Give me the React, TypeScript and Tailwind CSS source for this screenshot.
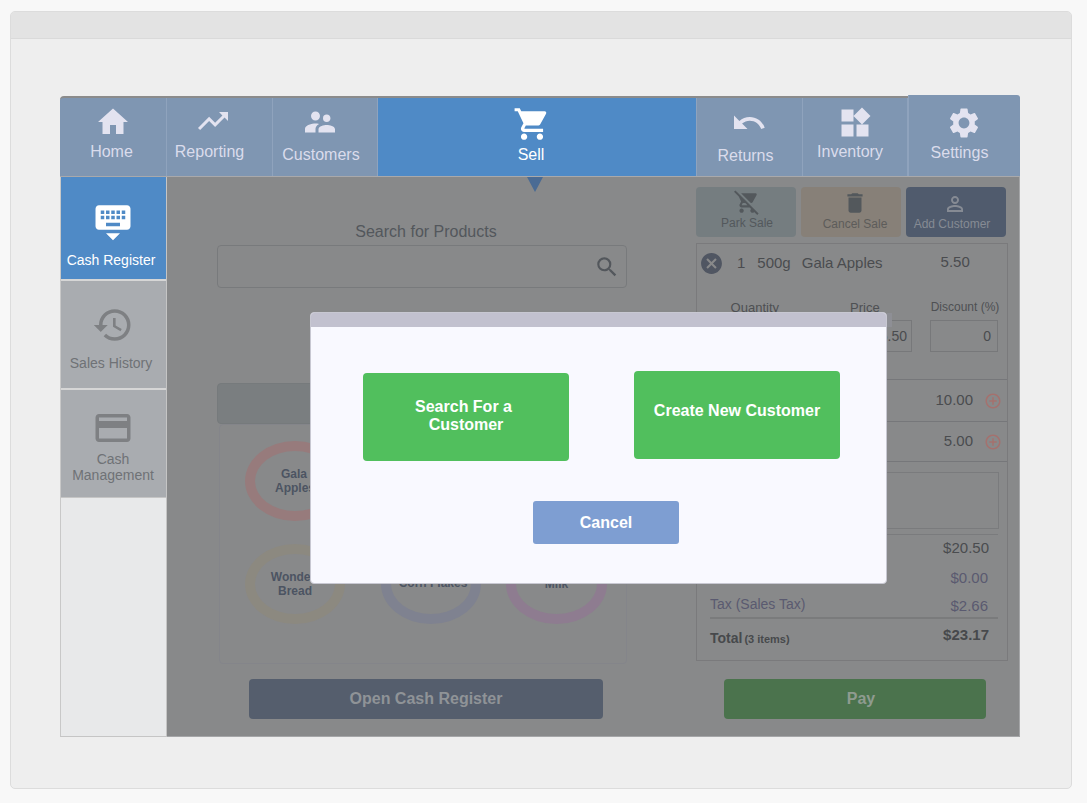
import React from "react";
import { MdHome, MdTrendingUp, MdSupervisorAccount, MdShoppingCart, MdUndo, MdWidgets, MdSettings, MdKeyboardHide, MdHistory, MdPayment, MdSearch, MdRemoveShoppingCart, MdDelete, MdPersonOutline, MdCancel, MdControlPoint } from "react-icons/md";

function Tab({ cls, icon, label, labelCls }: { cls: string; icon: React.ReactNode; label: string; labelCls: string }) {
  return (
    <div className={"flex flex-col items-center shrink-0 border-r border-[#8fa3bd] " + cls}>
      {icon}
      <span className={"text-[16px] leading-[18px] text-[#dadcec] " + labelCls}>{label}</span>
    </div>
  );
}

function Ring({ cls, l1, l2, textCls }: { cls: string; l1: string; l2?: string; textCls?: string }) {
  return (
    <div className={"w-[100px] h-[80px] rounded-[50%] border-[10px] flex flex-col items-center justify-center text-[12px] leading-[14px] font-bold text-[#4c5462] shrink-0 " + cls}>
      <span className={textCls}>{l1}</span>
      {l2 && <span>{l2}</span>}
    </div>
  );
}

function ActionBtn({ cls, icon, label, textCls }: { cls: string; icon: React.ReactNode; label: string; textCls: string }) {
  return (
    <div className={"w-[100px] h-[50px] rounded-[4px] flex flex-col items-center shrink-0 " + cls}>
      {icon}
      <span className={"text-[12px] leading-[14px] mt-[1px] " + textCls}>{label}</span>
    </div>
  );
}

export default function App() {
  return (
    <div className="w-[1087px] h-[803px] bg-[#f8f8f8] pt-[11px] pl-[10px] overflow-hidden font-['Liberation_Sans',Arial,sans-serif]">
      <div className="w-[1062px] h-[778px] bg-[#eeeeee] border border-[#dcdcdc] rounded-[5px] overflow-hidden">
        <div className="h-[27px] bg-[#e3e3e3] border-b border-[#dadada]" />
        <div className="pt-[57px] pl-[49px]">
          <div className="relative w-[960px] h-[641px]">
            {/* top nav */}
            <div className="flex h-[81px] bg-[#7f96b2] border-t-2 border-[#8b8b8b] rounded-t-[4px] border-b border-b-[#a9a9ab]">
              <Tab cls="w-[107px] pt-[6px] rounded-tl-[4px]" icon={<MdHome size={36} className="text-[#e3e3f0] mr-[1px]" />} label="Home" labelCls="mt-[3px] mr-[3px]" />
              <Tab cls="w-[106px] pt-[5px]" icon={<MdTrendingUp size={36} className="text-[#e3e3f0] mr-[14px]" />} label="Reporting" labelCls="mt-[4px] mr-[8px] -ml-[12px]" />
              <Tab cls="w-[105px] pt-[6px]" icon={<MdSupervisorAccount size={36} className="text-[#e3e3f0] mr-[10px]" />} label="Customers" labelCls="mt-[6px] -ml-[8px]" />
              <div className="w-[319px] bg-[#4f8ac6] flex flex-col items-center shrink-0 pt-[7px] border-r border-[#8fa3bd]">
                <MdShoppingCart size={38} className="text-white mr-[10px]" />
                <span className="text-[16px] leading-[18px] text-white mt-[3px] mr-[12px]">Sell</span>
              </div>
              <Tab cls="w-[106px] pt-[7px]" icon={<MdUndo size={36} className="text-[#e3e3f0] mr-[2px]" />} label="Returns" labelCls="mt-[6px] -ml-[8px]" />
              <Tab cls="w-[105px] pt-[7px]" icon={<MdWidgets size={36} className="text-[#e3e3f0]" />} label="Inventory" labelCls="mt-[2px] -ml-[10px]" />
              <Tab cls="flex-1 -mt-[3px] h-[81px] pt-[10px] bg-[#7f96b2] rounded-tr-[3px] border-r-0 border-l border-l-[#8fa3bd]" icon={<MdSettings size={36} className="text-[#e3e3f0] mr-[2px]" />} label="Settings" labelCls="mt-[3px] -ml-[10px]" />
            </div>

            <div className="flex h-[560px]">
              {/* sidebar */}
              <div className="w-[107px] shrink-0 bg-[#e8e9ea] border-l border-[#c8c8c8] border-r border-r-[#c5c5c5] border-b border-b-[#c5c5c5] flex flex-col">
                <div className="h-[104px] bg-[#4f8ac6] flex flex-col items-center pt-[23px] border-b-2 border-[#d6d6d6]">
                  <MdKeyboardHide size={42} className="text-white mr-[1px]" />
                  <span className="text-[14px] leading-[16px] text-white mt-[10px] -ml-[5px]">Cash Register</span>
                </div>
                <div className="h-[109px] bg-[#a9acb0] flex flex-col items-center pt-[23px] border-b-2 border-[#d6d6d6]">
                  <MdHistory size={42} className="text-[#7e8083] mr-[2px]" />
                  <span className="text-[14px] leading-[16px] text-[#6f7276] mt-[9px] -ml-[5px]">Sales History</span>
                </div>
                <div className="h-[108px] bg-[#a9acb0] flex flex-col items-center pt-[17px] border-b border-[#c5c5c5]">
                  <MdPayment size={42} className="text-[#7e8083] mr-[2px]" />
                  <span className="text-[14px] leading-[16px] text-[#6f7276] mt-[2px] mr-[1px] text-center">Cash<br />Management</span>
                </div>
              </div>

              {/* main */}
              <div className="flex-1 bg-[#88898a] border-r border-r-[#a5a6a8] border-b border-b-[#a5a6a8] flex">
                <div className="w-[529px] shrink-0 flex flex-col items-start pl-[50px]">
                  <div className="w-[410px] pl-[8px] text-center text-[16px] leading-[18px] text-[#53575c] mt-[46px]">Search for Products</div>
                  <div className="w-[410px] h-[43px] mt-[4px] border border-[#787a7c] rounded-[4px] flex items-center justify-end pr-[6px]">
                    <MdSearch size={26} className="text-[#53575c]" />
                  </div>
                  <div className="w-[410px] h-[41px] mt-[95px] bg-[#7a7e80] border border-[#767a7c] rounded-[4px]" />
                  <div className="w-[408px] h-[240px] ml-[2px] border border-[#84858a] rounded-[4px] flex flex-col pl-[25px] pt-[16px]">
                    <div className="flex gap-[36px]">
                      <Ring cls="border-[#977b7c]" l1="Gala" l2="Apples" textCls="mr-[2px]" />
                    </div>
                    <div className="flex mt-[23px]">
                      <Ring cls="border-[#8c8980]" l1="Wonder" l2="Bread" textCls="mr-[4px]" />
                      <Ring cls="border-[#7f8290] ml-[36px] pb-[2px]" l1="Corn Flakes" textCls="ml-[4px]" />
                      <Ring cls="border-[#8e7c90] ml-[25px] w-[101px]" l1="Milk" />
                    </div>
                  </div>
                  <div className="w-[354px] h-[40px] ml-[32px] mt-[15px] bg-[#555e6d] rounded-[4px] flex items-center justify-center text-[16px] font-bold text-[#8f9397]">Open Cash Register</div>
                </div>

                {/* right */}
                <div className="flex-1 flex flex-col">
                  <div className="flex gap-[5px] mt-[10px]">
                    <ActionBtn cls="bg-[#757d80]" icon={<MdRemoveShoppingCart size={26} className="text-[#53585c] mt-[2px] ml-[2px]" />} label="Park Sale" textCls="text-[#53585c] ml-[2px]" />
                    <ActionBtn cls="bg-[#878078]" icon={<MdDelete size={26} className="text-[#53585c] mt-[3px] ml-[8px]" />} label="Cancel Sale" textCls="text-[#5d5c5a] ml-[8px]" />
                    <ActionBtn cls="bg-[#505b6d]" icon={<MdPersonOutline size={24} className="text-[#868b94] mt-[5px] mr-[2px]" />} label="Add Customer" textCls="text-[#868b94] mr-[8px]" />
                  </div>
                  <div className="w-[312px] h-[418px] mt-[6px] border border-[#7a7a7c] flex flex-col text-[#4a4c4f]">
                    <div className="flex items-start h-[136px] border-b border-[#76777a] flex-col shrink-0">
                      <div className="flex items-center h-[20px] mt-[9px] text-[15px] w-full">
                        <MdCancel size={25} className="text-[#505662] ml-[2px] shrink-0" />
                        <span className="ml-[13px]">1</span>
                        <span className="ml-[12px]">500g</span>
                        <span className="ml-[11px]">Gala Apples</span>
                        <span className="ml-[58px] -mt-[2px]">5.50</span>
                      </div>
                      <div className="flex w-full mt-[28px] text-[13px] leading-[14px] text-[#4e5053]">
                        <span className="w-[81px] text-right ml-[1px]">Quantity</span>
                        <span className="ml-[71px]">Price</span>
                        <span className="ml-[51px] text-[12px] -mt-[1px]">Discount (%)</span>
                      </div>
                      <div className="flex w-full mt-[5px] text-[14px]">
                        <div className="w-[52px] h-[32px] ml-[163px] border border-[#77787a] flex items-center justify-end pr-[4px]">5.50</div>
                        <div className="w-[68px] h-[32px] ml-[18px] border border-[#77787a] flex items-center justify-end pr-[6px]">0</div>
                      </div>
                    </div>
                    <div className="h-[42px] shrink-0 border-b border-[#76777a] flex items-center justify-end pr-[5px] text-[15px]">
                      <span className="mr-[11px]">10.00</span>
                      <MdControlPoint size={18} className="text-[#a5716e]" />
                    </div>
                    <div className="h-[40px] shrink-0 border-b border-[#76777a] flex items-center justify-end pr-[5px] text-[15px]">
                      <span className="mr-[11px]">5.00</span>
                      <MdControlPoint size={18} className="text-[#a5716e]" />
                    </div>
                    <div className="ml-[13px] mt-[10px] w-[289px] h-[57px] border border-[#7a7b7d] shrink-0" />
                    <div className="ml-[13px] mt-[5px] w-[288px] border-t border-[#7a7b7d]" />
                    <div className="flex justify-end pr-[18px] text-[15px] leading-[18px] mt-[4px] text-[#4a4c4f]">$20.50</div>
                    <div className="flex justify-end pr-[19px] text-[15px] leading-[18px] mt-[12px] text-[#5a5a70]">$0.00</div>
                    <div className="flex justify-between pl-[13px] pr-[19px] text-[14px] leading-[18px] mt-[8px] text-[#5a5a70]">
                      <span>Tax (Sales Tax)</span>
                      <span className="text-[15px] mt-[2px]">$2.66</span>
                    </div>
                    <div className="ml-[13px] mt-[2px] w-[288px] border-t-2 border-[#7a7b7c]" />
                    <div className="flex justify-between pl-[13px] pr-[18px] mt-[7px] font-bold text-[#47494c]">
                      <span className="text-[14px] leading-[18px] mt-[3px]">Total<span className="text-[11px] ml-[2px]">(3 items)</span></span>
                      <span className="text-[15px] leading-[18px]">$23.17</span>
                    </div>
                  </div>
                  <div className="w-[262px] h-[40px] ml-[28px] mt-[18px] pl-[12px] bg-[#4b734d] rounded-[4px] flex items-center justify-center text-[16px] font-bold text-[#8f9b90]">Pay</div>
                </div>
              </div>
            </div>

            {/* active tab pointer */}
            <svg className="absolute left-[467px] top-[81px]" width="16" height="15" viewBox="0 0 16 15"><path d="M0 0H16L8 15Z" fill="#4a6b94" /></svg>

            {/* modal */}
            <div className="absolute left-[250px] top-[216px] w-[577px] h-[272px] bg-[#f9f9ff] border border-[#c8c8d2] rounded-[4px]">
              <div className="absolute left-[576px] top-0 w-[5px] h-[14px] bg-[#8e8f95]" />
              <div className="h-[14px] bg-[#c2c1cf] rounded-t-[3px]" />
              <div className="flex items-start pl-[52px] pt-[44px]">
                <div className="w-[206px] h-[88px] mt-[2px] bg-[#51bf5d] rounded-[4px] text-white font-bold text-[16px] leading-[18px] text-center pt-[25px]">
                  <span className="block mr-[5px]">Search For a</span>
                  <span className="block">Customer</span>
                </div>
                <div className="w-[206px] h-[88px] ml-[65px] bg-[#51bf5d] rounded-[4px] text-white font-bold text-[16px] leading-[18px] text-center pt-[31px]">Create New Customer</div>
              </div>
              <div className="w-[146px] h-[43px] ml-[222px] mt-[40px] bg-[#7e9ed2] rounded-[3px] text-white font-bold text-[16px] flex items-center justify-center">Cancel</div>
            </div>
          </div>
        </div>
      </div>
    </div>
  );
}
